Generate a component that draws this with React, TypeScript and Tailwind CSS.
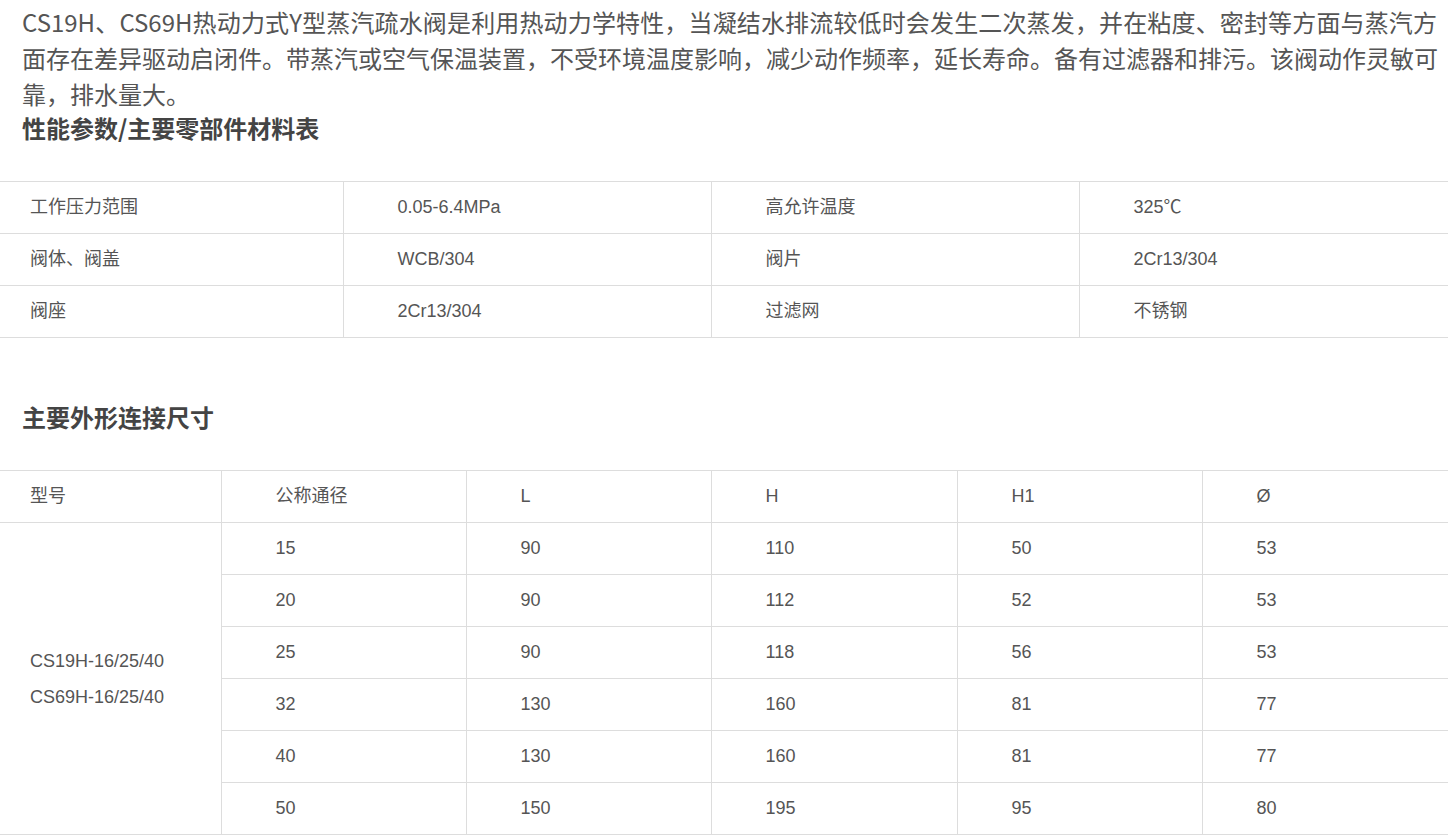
const materials = [
  ["工作压力范围", "0.05-6.4MPa", "高允许温度", "325℃"],
  ["阀体、阀盖", "WCB/304", "阀片", "2Cr13/304"],
  ["阀座", "2Cr13/304", "过滤网", "不锈钢"],
];

const sizes = [
  ["15", "90", "110", "50", "53"],
  ["20", "90", "112", "52", "53"],
  ["25", "90", "118", "56", "53"],
  ["32", "130", "160", "81", "77"],
  ["40", "130", "160", "81", "77"],
  ["50", "150", "195", "95", "80"],
];

const cell = "h-[52px] border border-[#dddddd] align-middle pl-[54px] text-left font-normal";
const firstCell = "h-[52px] border border-[#dddddd] border-l-0 align-middle pl-[30px] text-left font-normal";

export default function App() {
  return (
    <div className="w-[1448px] bg-white text-[#555555]">
      <div className="pl-[22px] pt-[4px] w-[1437px] font-['Noto_Sans_CJK_SC',sans-serif] text-[24px] leading-[36px]">
        <div className="whitespace-nowrap text-justify [text-align-last:justify]">
          CS19H、CS69H热动力式Y型蒸汽疏水阀是利用热动力学特性，当凝结水排流较低时会发生二次蒸发，并在粘度、密封等方面与蒸汽方
        </div>
        <div className="whitespace-nowrap text-justify [text-align-last:justify]">
          面存在差异驱动启闭件。带蒸汽或空气保温装置，不受环境温度影响，减少动作频率，延长寿命。备有过滤器和排污。该阀动作灵敏可
        </div>
        <div>靠，排水量大。</div>
        <h2 className="font-bold text-[#444444] leading-[34px] -mt-[1px]">性能参数/主要零部件材料表</h2>
      </div>

      <table className="mt-[36px] w-[1448px] table-fixed border-collapse font-['Liberation_Sans','Noto_Sans_CJK_SC',sans-serif] text-[18px]">
        <colgroup>
          <col className="w-[343px]" />
          <col className="w-[368px]" />
          <col className="w-[368px]" />
          <col className="w-[369px]" />
        </colgroup>
        <tbody>
          {materials.map((row) => (
            <tr key={row[0]}>
              {row.map((v, i) => (
                <td key={i} className={i === 0 ? firstCell : cell}>
                  {v}
                </td>
              ))}
            </tr>
          ))}
        </tbody>
      </table>

      <h2 className="mt-[62px] pl-[22px] font-['Noto_Sans_CJK_SC',sans-serif] text-[24px] leading-[34px] font-bold text-[#444444]">
        主要外形连接尺寸
      </h2>

      <table className="mt-[36px] w-[1448px] table-fixed border-collapse font-['Liberation_Sans','Noto_Sans_CJK_SC',sans-serif] text-[18px]">
        <colgroup>
          <col className="w-[221px]" />
          <col className="w-[245px]" />
          <col className="w-[245px]" />
          <col className="w-[246px]" />
          <col className="w-[245px]" />
          <col className="w-[246px]" />
        </colgroup>
        <thead>
          <tr>
            <th className={firstCell}>型号</th>
            <th className={cell}>公称通径</th>
            <th className={cell}>L</th>
            <th className={cell}>H</th>
            <th className={cell}>H1</th>
            <th className={cell}>Ø</th>
          </tr>
        </thead>
        <tbody>
          {sizes.map((row, r) => (
            <tr key={row[0]}>
              {r === 0 && (
                <td rowSpan={6} className="border border-[#dddddd] border-l-0 align-middle pl-[30px] leading-[36px]">
                  CS19H-16/25/40
                  <br />
                  CS69H-16/25/40
                </td>
              )}
              {row.map((v, i) => (
                <td key={i} className={cell}>
                  {v}
                </td>
              ))}
            </tr>
          ))}
        </tbody>
      </table>
    </div>
  );
}
